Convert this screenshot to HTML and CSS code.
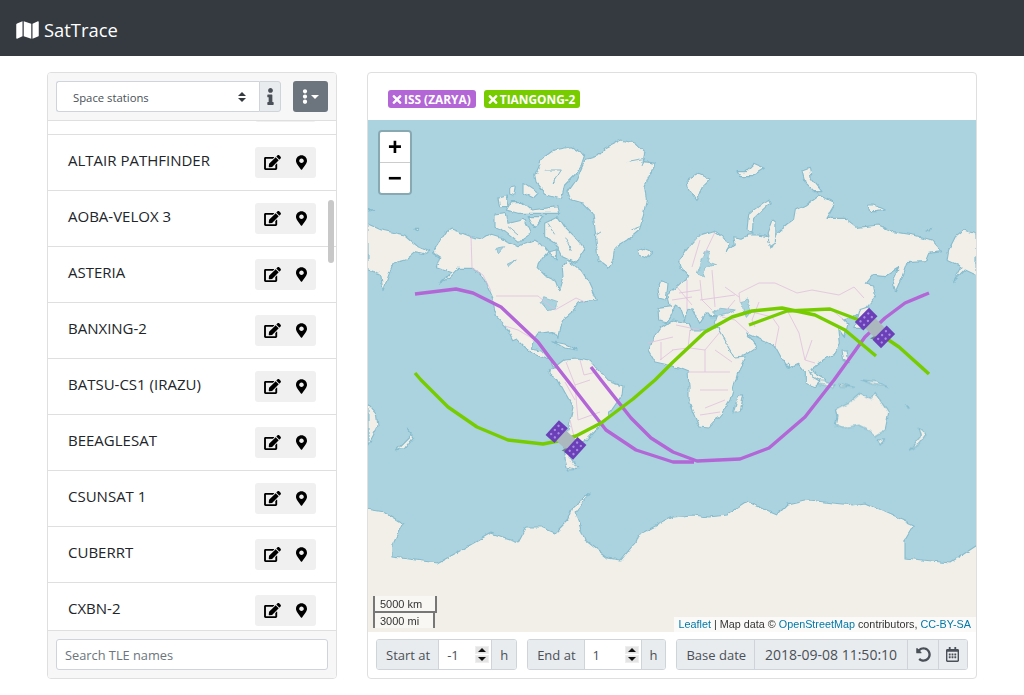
FILE: index.html
```html
<!DOCTYPE html>
<html lang="en">
  <head>
    <meta charset="UTF-8" />
    <meta name="viewport" content="width=device-width, initial-scale=1.0" />
    <title>SatTrace</title>
    <link rel="stylesheet" href="styles.css">
  </head>
  <body>
    <svg class="icon-defs" aria-hidden="true">
      <symbol id="i-map" viewBox="0 0 576 512"><path d="M0 117.66v346.32c0 11.32 11.43 19.06 21.94 14.86L160 416V32L20.12 87.95A32.006 32.006 0 0 0 0 117.66zM192 416l192 64V96L192 32v384zM554.06 33.16L416 96v384l139.88-55.95A31.996 31.996 0 0 0 576 394.34V48.02c0-11.32-11.43-19.06-21.94-14.86z"/></symbol>
      <symbol id="i-edit" viewBox="0 0 576 512"><path d="M402.6 83.2l90.2 90.2c3.8 3.8 3.8 10 0 13.8L274.4 405.6l-92.8 10.3c-12.4 1.4-22.9-9.1-21.5-21.5l10.3-92.8L388.8 83.2c3.8-3.8 10-3.8 13.8 0zm162-22.9l-48.8-48.8c-15.2-15.2-39.9-15.2-55.2 0l-35.4 35.4c-3.8 3.8-3.8 10 0 13.8l90.2 90.2c3.8 3.8 10 3.8 13.8 0l35.4-35.4c15.2-15.3 15.2-40 0-55.2zM384 346.2V448H64V128h229.8c3.2 0 6.2-1.3 8.5-3.5l40-40c7.6-7.6 2.2-20.5-8.5-20.5H48C21.5 64 0 85.5 0 112v352c0 26.5 21.5 48 48 48h352c26.5 0 48-21.5 48-48V306.2c0-10.7-12.9-16-20.5-8.5l-40 40c-2.2 2.3-3.5 5.3-3.5 8.5z"/></symbol>
      <symbol id="i-marker" viewBox="0 0 384 512"><path d="M172.268 501.67C26.97 291.031 0 260.497 0 192 0 85.961 85.961 0 192 0s192 85.961 192 192c0 68.497-26.97 99.031-172.268 309.67-9.535 13.774-29.93 13.773-39.464 0zM192 272c44.183 0 80-35.817 80-80s-35.817-80-80-80-80 35.817-80 80 35.817 80 80 80z"/></symbol>
      <symbol id="i-info" viewBox="0 0 192 512"><path d="M20 424.229h20V279.771H20c-11.046 0-20-8.954-20-20V212c0-11.046 8.954-20 20-20h112c11.046 0 20 8.954 20 20v212.229h20c11.046 0 20 8.954 20 20V492c0 11.046-8.954 20-20 20H20c-11.046 0-20-8.954-20-20v-47.771c0-11.046 8.954-20 20-20zM96 0C56.235 0 24 32.235 24 72s32.235 72 72 72 72-32.235 72-72S135.764 0 96 0z"/></symbol>
      <symbol id="i-dots" viewBox="0 0 192 512"><path d="M96 184c39.8 0 72 32.2 72 72s-32.2 72-72 72-72-32.2-72-72 32.2-72 72-72zM24 80c0 39.8 32.2 72 72 72s72-32.2 72-72S135.8 8 96 8 24 40.2 24 80zm0 352c0 39.8 32.2 72 72 72s72-32.2 72-72-32.2-72-72-72-72 32.2-72 72z"/></symbol>
      <symbol id="i-times" viewBox="0 0 352 512"><path d="M242.72 256l100.07-100.07c12.28-12.28 12.28-32.19 0-44.48l-22.24-22.24c-12.28-12.28-32.19-12.28-44.48 0L176 189.28 75.93 89.21c-12.28-12.28-32.19-12.28-44.48 0L9.21 111.45c-12.28 12.28-12.28 32.19 0 44.48L109.28 256 9.21 356.07c-12.28 12.28-12.28 32.19 0 44.48l22.24 22.24c12.28 12.28 32.2 12.28 44.48 0L176 322.72l100.07 100.07c12.28 12.28 32.2 12.28 44.48 0l22.24-22.24c12.28-12.28 12.28-32.19 0-44.48L242.72 256z"/></symbol>
      <symbol id="i-undo" viewBox="0 0 512 512"><path d="M255.545 8c-66.269.119-126.438 26.233-170.86 68.685L48.971 40.971C33.851 25.851 8 36.559 8 57.941V192c0 13.255 10.745 24 24 24h134.059c21.382 0 32.09-25.851 16.971-40.971l-41.75-41.75c30.864-28.899 70.801-44.907 113.23-45.273 92.398-.798 170.283 73.977 169.484 169.442C423.236 348.009 349.816 424 256 424c-41.127 0-79.997-14.678-110.63-41.556-4.743-4.161-11.906-3.908-16.368.553L89.34 422.659c-4.872 4.872-4.631 12.815.482 17.433C133.798 479.813 192.074 504 256 504c136.966 0 247.999-111.033 248-247.998C504.001 119.193 392.354 7.755 255.545 8z"/></symbol>
      <symbol id="i-calendar" viewBox="0 0 448 512"><path d="M148 288h-40c-6.6 0-12-5.4-12-12v-40c0-6.6 5.4-12 12-12h40c6.6 0 12 5.4 12 12v40c0 6.6-5.4 12-12 12zm108-12v-40c0-6.6-5.4-12-12-12h-40c-6.6 0-12 5.4-12 12v40c0 6.6 5.4 12 12 12h40c6.6 0 12-5.4 12-12zm96 0v-40c0-6.6-5.4-12-12-12h-40c-6.6 0-12 5.4-12 12v40c0 6.6 5.4 12 12 12h40c6.6 0 12-5.4 12-12zm-96 96v-40c0-6.6-5.4-12-12-12h-40c-6.6 0-12 5.4-12 12v40c0 6.6 5.4 12 12 12h40c6.6 0 12-5.4 12-12zm-96 0v-40c0-6.6-5.4-12-12-12h-40c-6.6 0-12 5.4-12 12v40c0 6.6 5.4 12 12 12h40c6.6 0 12-5.4 12-12zm192 0v-40c0-6.6-5.4-12-12-12h-40c-6.6 0-12 5.4-12 12v40c0 6.6 5.4 12 12 12h40c6.6 0 12-5.4 12-12zm96-260v352c0 26.5-21.5 48-48 48H48c-26.5 0-48-21.5-48-48V112c0-26.5 21.5-48 48-48h48V12c0-6.6 5.4-12 12-12h40c6.6 0 12 5.4 12 12v52h128V12c0-6.6 5.4-12 12-12h40c6.6 0 12 5.4 12 12v52h48c26.5 0 48 21.5 48 48zm-48 346V160H48v298c0 3.3 2.7 6 6 6h340c3.3 0 6-2.7 6-6z"/></symbol>
      <symbol id="i-sat" viewBox="-20 -20 40 40" overflow="visible">
        <rect x="-7" y="-7" width="14" height="14" fill="#abb8bd"/>
        <path d="M-7 5 L-11 4 L-8 9 L-5 12 L-4 8 Z" fill="#6f7f86"/>
        <g transform="translate(0 -12.5)">
          <rect x="-10" y="-6" width="20" height="12" fill="#6a3fb8"/>
          <g fill="#a98ee0"><circle cx="-5.5" cy="-2.5" r="1.2"/><circle cx="0" cy="-2.5" r="1.2"/><circle cx="5.5" cy="-2.5" r="1.2"/><circle cx="-5.5" cy="2.5" r="1.2"/><circle cx="0" cy="2.5" r="1.2"/><circle cx="5.5" cy="2.5" r="1.2"/></g>
        </g>
        <g transform="translate(0 12.5)">
          <rect x="-10" y="-6" width="20" height="12" fill="#6a3fb8"/>
          <g fill="#a98ee0"><circle cx="-5.5" cy="-2.5" r="1.2"/><circle cx="0" cy="-2.5" r="1.2"/><circle cx="5.5" cy="-2.5" r="1.2"/><circle cx="-5.5" cy="2.5" r="1.2"/><circle cx="0" cy="2.5" r="1.2"/><circle cx="5.5" cy="2.5" r="1.2"/></g>
        </g>
      </symbol>
      <filter id="rough" x="-5%" y="-5%" width="110%" height="110%">
        <feTurbulence type="fractalNoise" baseFrequency="0.11" numOctaves="3" seed="4"/>
        <feDisplacementMap in="SourceGraphic" scale="5" xChannelSelector="R" yChannelSelector="G"/>
      </filter>
    </svg>

    <nav class="navbar">
      <svg class="brand-icon"><use href="#i-map"/></svg>
      <span class="brand-name">SatTrace</span>
    </nav>

    <main class="page">
      <section class="card sidebar">
        <div class="card-bar sidebar-top">
          <div class="select-group">
            <select class="group-select">
              <option>Space stations</option>
            </select>
            <span class="info-addon"><svg class="icon-info"><use href="#i-info"/></svg></span>
          </div>
          <button class="menu-btn">
            <svg class="icon-dots"><use href="#i-dots"/></svg>
            <span class="caret"></span>
          </button>
        </div>

        <div class="tle-wrap">
          <ul class="tle-list">
            <li class="tle-item tle-first">
              <span></span>
              <div class="tle-actions"><svg class="icon-edit"><use href="#i-edit"/></svg><svg class="icon-marker"><use href="#i-marker"/></svg></div>
            </li>
            <li class="tle-item">
              <span>ALTAIR PATHFINDER</span>
              <div class="tle-actions"><svg class="icon-edit"><use href="#i-edit"/></svg><svg class="icon-marker"><use href="#i-marker"/></svg></div>
            </li>
            <li class="tle-item">
              <span>AOBA-VELOX 3</span>
              <div class="tle-actions"><svg class="icon-edit"><use href="#i-edit"/></svg><svg class="icon-marker"><use href="#i-marker"/></svg></div>
            </li>
            <li class="tle-item">
              <span>ASTERIA</span>
              <div class="tle-actions"><svg class="icon-edit"><use href="#i-edit"/></svg><svg class="icon-marker"><use href="#i-marker"/></svg></div>
            </li>
            <li class="tle-item">
              <span>BANXING-2</span>
              <div class="tle-actions"><svg class="icon-edit"><use href="#i-edit"/></svg><svg class="icon-marker"><use href="#i-marker"/></svg></div>
            </li>
            <li class="tle-item">
              <span>BATSU-CS1 (IRAZU)</span>
              <div class="tle-actions"><svg class="icon-edit"><use href="#i-edit"/></svg><svg class="icon-marker"><use href="#i-marker"/></svg></div>
            </li>
            <li class="tle-item">
              <span>BEEAGLESAT</span>
              <div class="tle-actions"><svg class="icon-edit"><use href="#i-edit"/></svg><svg class="icon-marker"><use href="#i-marker"/></svg></div>
            </li>
            <li class="tle-item">
              <span>CSUNSAT 1</span>
              <div class="tle-actions"><svg class="icon-edit"><use href="#i-edit"/></svg><svg class="icon-marker"><use href="#i-marker"/></svg></div>
            </li>
            <li class="tle-item">
              <span>CUBERRT</span>
              <div class="tle-actions"><svg class="icon-edit"><use href="#i-edit"/></svg><svg class="icon-marker"><use href="#i-marker"/></svg></div>
            </li>
            <li class="tle-item">
              <span>CXBN-2</span>
              <div class="tle-actions"><svg class="icon-edit"><use href="#i-edit"/></svg><svg class="icon-marker"><use href="#i-marker"/></svg></div>
            </li>
          </ul>
          <div class="scroll-thumb"></div>
        </div>

        <div class="card-bar sidebar-bottom">
          <input class="search-input" type="text" placeholder="Search TLE names" />
        </div>
      </section>

      <section class="card viewer">
        <div class="badges">
          <span class="badge badge-iss"><svg class="icon-times"><use href="#i-times"/></svg>ISS (ZARYA)</span>
          <span class="badge badge-tiangong"><svg class="icon-times"><use href="#i-times"/></svg>TIANGONG-2</span>
        </div>

        <div class="map">
          <svg class="map-art" viewBox="368 120 608 512" preserveAspectRatio="none">
            <g filter="url(#rough)">
            <!-- land traced from the tiles, in 3x crop coordinates -->
            <g transform="translate(368 120) scale(.33333)">
              <g class="land">
                <path d="M197,392 L215,365 L235,335 L250,327 L310,350 L345,358 L370,343 L400,352 L420,365 L450,380 L470,370 L500,360 L520,372 L540,395 L515,425 L510,445 L530,465 L560,480 L572,512 L585,470 L583,440 L600,422 L640,452 L665,490 L688,540 L650,545 L630,552 L618,568 L592,590 L575,622 L570,655 L555,635 L510,640 L497,658 L490,685 L520,690 L533,705 L560,735 L592,780 L575,780 L545,720 L490,700 L450,660 L437,665 L415,620 L385,590 L380,550 L365,515 L340,462 L310,445 L270,445 L240,475 L215,490 L250,455 L205,440 L215,412 L197,400 Z"/>
                <path d="M600,215 L625,180 L640,145 L655,115 L690,105 L710,85 L760,60 L800,70 L830,100 L825,125 L862,130 L845,165 L830,200 L835,240 L825,290 L815,330 L780,360 L740,385 L735,420 L722,445 L690,420 L685,370 L680,320 L675,280 L645,250 L610,240 Z"/>
                <path d="M500,165 L520,120 L560,90 L610,80 L650,105 L640,135 L620,165 L590,195 L580,235 L530,220 L505,190 Z"/>
                <path d="M530,310 L570,290 L590,320 L620,350 L650,385 L622,430 L580,410 L560,370 L530,350 Z"/>
                <path d="M378,285 L415,280 L420,310 L470,298 L490,340 L450,367 L410,335 L378,322 Z"/>
                <path d="M390,235 L415,228 L420,260 L395,260 Z"/>
                <path d="M430,245 L460,245 L490,270 L570,260 L575,280 L500,280 L450,280 L415,270 Z"/>
                <path d="M465,190 L510,220 L495,235 L465,220 Z"/>
                <path d="M425,205 L445,200 L440,230 L425,225 Z"/>
                <path d="M480,290 L525,290 L500,325 Z"/>
                <path d="M540,395 L565,390 L565,420 Z"/>
                <path d="M810,395 L830,385 L855,395 L835,415 L815,405 Z"/>
                <path d="M0,312 L40,330 L110,345 L150,380 L185,395 L170,402 L140,395 L110,420 L75,430 L45,512 L38,462 L0,450 Z"/>
                <path d="M555,665 L590,672 L625,690 L590,684 Z"/>
                <path d="M138,325 L155,325 L150,332 Z"/>
                <path d="M870,505 L880,482 L900,490 L895,540 L875,535 Z"/>
                <path d="M0,265 L18,272 L5,276 Z"/>
              </g>
              <path class="inner-water" d="M527,530 L570,545 L565,567 L540,572 L520,548 Z M385,385 L410,380 L392,400 Z M418,432 L445,420 L422,440 Z"/>
              <path class="fjord" d="M775,125 L830,115 L822,135 M790,330 L815,320 M685,345 L700,335 M530,150 L580,150 L555,190 M420,320 L450,345 M540,310 L560,340 M590,350 L610,390"/>
            </g>

            <g transform="translate(672 120) scale(.33333)">
              <g class="land">
                <path d="M-42,565 L-5,560 L-12,530 L0,510 L15,500 L25,490 L45,480 L50,470 L25,440 L20,425 L50,385 L85,345 L125,332 L175,370 L160,395 L190,375 L185,350 L210,355 L230,345 L255,345 L290,350 L300,385 L315,340 L345,315 L365,300 L370,270 L400,255 L440,225 L480,245 L485,260 L465,295 L520,295 L555,322 L620,315 L665,335 L725,345 L780,360 L810,395 L770,400 L760,425 L705,428 L690,470 L670,515 L663,480 L680,445 L640,470 L600,465 L580,490 L605,495 L610,530 L575,570 L545,590 L515,600 L528,612 L518,650 L500,622 L505,670 L490,700 L440,730 L420,745 L445,785 L430,800 L400,790 L400,755 L380,730 L345,745 L310,680 L280,665 L225,640 L255,680 L225,700 L175,725 L140,630 L130,605 L135,590 L115,590 L105,578 L80,610 L60,570 L50,568 L40,605 L25,565 L10,555 L-5,590 L-15,605 L-40,600 Z"/>
                <path d="M45,180 L80,160 L115,175 L90,200 L75,245 L50,210 Z"/>
                <path d="M225,330 L230,280 L290,238 L295,248 L245,295 L240,340 Z"/>
                <path d="M195,155 L220,155 L245,130 L280,145 L240,170 L205,170 Z"/>
                <path d="M390,150 L412,142 L418,175 L450,215 L425,215 L400,190 Z"/>
                <path d="M585,255 L610,255 L640,270 L610,275 L590,275 Z"/>
                <path d="M285,340 L300,300 L312,310 L310,370 L295,380 Z"/>
                <path d="M560,570 L590,560 L600,590 L570,625 L545,625 Z"/>
                <path d="M830,390 L850,350 L875,330 L912,342 L912,465 L880,450 L845,485 L870,440 L825,420 Z"/>
                <path d="M510,690 L525,690 L530,730 L515,720 Z"/>
                <path d="M340,730 L350,730 L348,745 Z"/>
                <path d="M410,750 L460,780 L455,790 L420,770 Z"/>
                <path d="M765,330 L778,325 L775,333 Z"/>
              </g>
              <path class="inner-water" d="M75,462 L100,395 L115,398 L108,425 L135,435 L105,440 L90,460 L95,472 Z M125,578 L145,565 L190,570 L170,582 L130,590 Z M205,545 L225,540 L235,575 L222,590 L215,565 Z"/>
            </g>

            <g transform="translate(672 380) scale(.33333)">
              <g class="land">
                <path d="M490,90 L530,70 L565,40 L600,55 L610,38 L650,100 L640,150 L610,168 L590,150 L560,135 L510,145 L490,135 L495,110 Z"/>
                <path d="M615,180 L635,180 L625,195 Z"/>
                <path d="M712,210 L745,170 L738,145 L762,165 L745,190 Z"/>
                <path d="M185,95 L200,45 L215,45 L205,90 Z"/>
                <path d="M440,0 L490,15 L480,22 L445,12 Z"/>
                <path d="M500,10 L545,22 L505,18 Z"/>
                <path d="M570,0 L610,5 L650,22 L600,12 Z"/>
                <path d="M700,75 L712,85 L704,82 Z"/>
              </g>
            </g>

            <g transform="translate(368 380) scale(.33333)">
              <g class="land">
                <path d="M0,70 L25,100 L30,140 L0,195 Z"/>
                <path d="M85,210 L130,165 L115,145 L137,170 L110,205 Z"/>
                <path d="M600,270 L630,268 L612,250 Z"/>
              </g>
            </g>

            <g class="land-px">
              <path d="M651,341 L660,328 L672,320 L689,323 L692,330 L712,330 L717,327 L735,358 L746,357 L738,372 L730,400 L722,413 L709,428 L699,427 L689,403 L689,387 L688,372 L673,366 L655,362 L648,350 Z"/>
              <path d="M548,372 L565,359 L578,358 L590,360 L608,380 L623,385 L622,395 L605,420 L586,440 L578,444 L570,458 L578,470 L568,467 L564,450 L568,430 L573,407 L558,380 Z"/>
            </g>

            <!-- Antarctica runs off the bottom and wraps past both map edges -->
            <path class="land-px" d="M360,508 L385,512 L403,523 L393,543 L393,557 L438,563 L458,552 L491,533 L518,542 L526,527 L541,527 L555,533 L568,520 L573,507 L591,493 L575,513 L585,540 L608,558 L621,560 L635,543 L638,535 L673,517 L692,515 L709,517 L727,515 L747,502 L777,515 L787,505 L809,500 L832,503 L852,505 L865,503 L885,512 L914,525 L905,540 L905,558 L950,563 L985,540 L985,640 L360,640 Z"/>
            </g>

            <!-- country borders -->
            <path class="border" d="M471,236 L472,268 L483,275 L491,291 M496,296 L538,296 L555,310 L576,298 L585,302 M505,326 L518,330 L535,340"/>
            <path class="border" d="M676,325 L700,330 M648,343 L673,337 M661,342 L661,360 M673,350 L660,360 M690,330 L688,348 L672,350 M690,348 L705,350 L720,332 M705,350 L705,372 L688,372 M705,372 L730,372 M715,350 L732,362 M700,390 L728,390 M705,408 L725,400 M700,415 L720,412"/>
            <path class="border" d="M566,362 L575,385 L590,380 M575,385 L578,420 M578,420 L600,412 M575,400 L565,382 M580,360 L584,375 L596,372 M570,420 L576,445"/>
            <path class="border" d="M677,287 L692,305 M687,280 L687,310 M672,300 L692,297 M700,280 L702,300 L712,310 M679,293 L700,290 M712,270 L715,307 M725,287 L739,297 M739,293 L759,283 L775,283 L797,293 L812,290 L839,295 L854,287 L864,298 M739,293 L740,302 M752,312 L772,317 L787,310 L812,310 L832,310 L844,320 M772,317 L779,327 L775,347 M787,310 L799,333 L805,360 M759,302 L752,320 L755,327 M722,317 L735,320 L749,333 M812,340 L805,360 L815,363 M725,312 L735,300 M705,253 L715,232 M692,267 L700,240 M700,300 L735,295"/>

            <!-- orbit tracks -->
            <polyline class="track track-iss" points="415,294 456,289 473,293 501,307 538,342 550,358 568,381 585,403 606,430 636,450 673,462 694,462"/>
            <polyline class="track track-iss" points="591,367 601,380 631,418 651,438 673,452 697,461 740,459 769,448 805,417 834,380 865,337 885,318 905,303 929,293"/>
            <polyline class="track track-tiangong" points="415,373 421,380 448,407 477,427 508,440 543,444 558,441 576,436 601,423 633,399 655,380 672,363 705,332 732,317 752,311 782,308 815,315 845,330 876,356"/>
            <polyline class="track track-tiangong" points="749,325 787,311 830,309 859,320 899,347 929,374"/>

            <use href="#i-sat" x="-20" y="-20" width="40" height="40" transform="translate(566 440) rotate(-48)"/>
            <use href="#i-sat" x="-20" y="-20" width="40" height="40" transform="translate(875 328) rotate(-45)"/>
          </svg>

          <div class="zoom-control">
            <a class="zoom-btn">+</a>
            <a class="zoom-btn">&#8722;</a>
          </div>

          <div class="scale-control">
            <div class="scale-km">5000 km</div>
            <div class="scale-mi">3000 mi</div>
          </div>

          <div class="attribution">
            <a>Leaflet</a> | Map data &copy; <a>OpenStreetMap</a> contributors, <a>CC-BY-SA</a>
          </div>
        </div>

        <div class="controls">
          <div class="input-group">
            <span class="addon">Start at</span>
            <div class="num-field num-start">
              <input class="num-input" type="number" value="-1" />
              <span class="spin"><span class="spin-up"></span><span class="spin-down"></span></span>
            </div>
            <span class="addon addon-h">h</span>
          </div>
          <div class="input-group">
            <span class="addon">End at</span>
            <div class="num-field num-end">
              <input class="num-input" type="number" value="1" />
              <span class="spin"><span class="spin-up"></span><span class="spin-down"></span></span>
            </div>
            <span class="addon addon-h">h</span>
          </div>
          <div class="input-group">
            <span class="addon">Base date</span>
            <span class="addon addon-date">2018-09-08 11:50:10</span>
            <button class="addon-btn"><svg class="icon-undo"><use href="#i-undo"/></svg></button>
            <button class="addon-btn btn-last"><svg class="icon-calendar"><use href="#i-calendar"/></svg></button>
          </div>
        </div>
      </section>
    </main>
  </body>
</html>
```

FILE: styles.css
```css
* {
  box-sizing: border-box;
}
html,
body {
  height: 100%;
}
body {
  margin: 0;
  display: flex;
  flex-direction: column;
  overflow: hidden;
  font-family: "Open Sans", "Noto Sans", sans-serif;
  font-size: 15px;
  color: #212529;
  background: #fff;
}
.icon-defs {
  position: absolute;
  width: 0;
  height: 0;
}
.navbar {
  flex: 0 0 56px;
  display: flex;
  align-items: center;
  padding: 3px 16px 0;
  background: #343a40;
  color: #fff;
}
.brand-icon {
  width: 23px;
  height: 20px;
  margin-right: 5px;
  fill: #fff;
}
.brand-name {
  font-size: 18.4px;
}
.page {
  flex: 1;
  min-height: 0;
  display: flex;
  gap: 30px;
  padding: 16px 47px;
}
.card {
  display: flex;
  flex-direction: column;
  border: 1px solid #dfdfdf;
  border-radius: 4px;
  background: #fff;
  overflow: hidden;
}
.card-bar {
  background: #f7f7f7;
  padding: 8px;
}

/* sidebar */
.sidebar {
  flex: 0 0 290px;
}
.sidebar-top {
  display: flex;
  justify-content: space-between;
  height: 48px;
  border-bottom: 1px solid #dfdfdf;
}
.select-group {
  display: flex;
  width: 225px;
  height: 31px;
}
.group-select {
  flex: 1;
  min-width: 0;
  appearance: none;
  padding: 2px 24px 0 16px;
  border: 1px solid #ced4da;
  border-right: 0;
  border-radius: 3px 0 0 3px;
  font-family: inherit;
  font-size: 11.3px;
  color: #495057;
  background: #fff url("data:image/svg+xml,%3Csvg xmlns='http://www.w3.org/2000/svg' viewBox='0 0 4 5'%3E%3Cpath fill='%23343a40' d='M2 0L0 2h4zm0 5L0 3h4z'/%3E%3C/svg%3E") no-repeat right 13px center / 8px 10px;
}
.info-addon {
  flex: 0 0 22px;
  display: flex;
  align-items: center;
  justify-content: center;
  border: 1px solid #ced4da;
  border-radius: 0 3px 3px 0;
  background: #e9ecef;
}
.icon-info {
  width: 7px;
  height: 17px;
  fill: #495057;
}
.menu-btn {
  width: 35px;
  height: 31px;
  display: flex;
  align-items: center;
  justify-content: center;
  gap: 3px;
  padding: 0;
  border: 0;
  border-radius: 3px;
  background: #6c757d;
}
.icon-dots {
  width: 6px;
  height: 15px;
  fill: #fff;
}
.caret {
  border-top: 4px solid #fff;
  border-left: 4px solid transparent;
  border-right: 4px solid transparent;
}
.tle-wrap {
  flex: 1;
  min-height: 0;
  position: relative;
  overflow: hidden;
}
.tle-list {
  list-style: none;
  margin: 0;
  padding: 0;
}
.tle-item {
  height: 56px;
  display: flex;
  justify-content: space-between;
  align-items: flex-start;
  padding: 12px 20px 0;
  border-bottom: 1px solid #dfdfdf;
  line-height: 26px;
}
.tle-first {
  margin-top: -42px;
}
.tle-actions {
  width: 61px;
  height: 31px;
  display: flex;
  align-items: center;
  justify-content: space-between;
  padding: 0 9px;
  border-radius: 3px;
  background: #f0f0f0;
  flex-shrink: 0;
}
.icon-edit {
  width: 17px;
  height: 15px;
  fill: #000;
}
.icon-marker {
  width: 11px;
  height: 15px;
  fill: #000;
}
.scroll-thumb {
  position: absolute;
  top: 79px;
  right: 2px;
  width: 6px;
  height: 63px;
  border-radius: 3px;
  background: #c8c8c8;
}
.sidebar-bottom {
  height: 48px;
  border-top: 1px solid #dfdfdf;
}
.search-input {
  display: block;
  width: 100%;
  height: 31px;
  padding: 1px 8px 0;
  border: 1px solid #ced4da;
  border-radius: 3px;
  font-family: inherit;
  font-size: 12.8px;
  color: #495057;
}
.search-input::placeholder {
  color: #6c757d;
}

/* map side */
.viewer {
  flex: 1;
  min-width: 0;
}
.badges {
  flex: 0 0 47px;
  display: flex;
  align-items: flex-start;
  gap: 8px;
  padding: 17px 20px 0;
}
.badge {
  height: 18px;
  display: flex;
  align-items: center;
  padding: 0 5px 0 4px;
  border-radius: 3px;
  font-size: 11.9px;
  font-weight: 700;
  color: #fff;
}
.badge-iss {
  background: #b366d6;
}
.badge-tiangong {
  background: #77cc00;
}
.icon-times {
  width: 10px;
  height: 13px;
  margin-right: 2px;
  fill: #fff;
}
.map {
  flex: 0 0 512px;
  position: relative;
  background: #aad3df;
  overflow: hidden;
}
.map-art {
  display: block;
  width: 100%;
  height: 100%;
}
.land path,
.land-px path,
path.land-px {
  fill: #f2efe9;
  stroke: #86bccd;
}
.land path {
  stroke-width: 3.3;
  stroke-linejoin: round;
}
.land-px path,
path.land-px {
  stroke-width: 1.1;
  stroke-linejoin: round;
}
.inner-water {
  fill: #aad3df;
  stroke: #86bccd;
  stroke-width: 2.4;
}
.fjord {
  fill: none;
  stroke: #86bccd;
  stroke-width: 3;
}
.border {
  fill: none;
  stroke: #e0bfdc;
  stroke-width: 0.8;
}
.track {
  fill: none;
  stroke-width: 3.4;
  stroke-linejoin: round;
}
.track-iss {
  stroke: #b366d6;
}
.track-tiangong {
  stroke: #77cc00;
}
.zoom-control {
  position: absolute;
  top: 10px;
  left: 10px;
  width: 34px;
  border: 2px solid rgba(0, 0, 0, 0.2);
  border-radius: 4px;
  background-clip: padding-box;
}
.zoom-btn {
  display: block;
  height: 30px;
  background: #fff;
  font: bold 24px/34px "Liberation Mono", monospace;
  text-align: center;
  color: #000;
}
.zoom-btn:first-child {
  height: 31px;
  border-bottom: 1px solid #ccc;
  border-radius: 2px 2px 0 0;
}
.zoom-btn:last-child {
  border-radius: 0 0 2px 2px;
}
.scale-control {
  position: absolute;
  left: 5px;
  bottom: 4px;
  font: 11px/1.1 "Liberation Sans", Arial, sans-serif;
  color: #333;
}
.scale-km,
.scale-mi {
  padding: 2px 5px 1px;
  border: 2px solid #777;
  background: rgba(255, 255, 255, 0.5);
  white-space: nowrap;
}
.scale-km {
  width: 64px;
  height: 17px;
  border-top: 0;
}
.scale-mi {
  width: 62px;
  height: 15px;
  border-top: 0;
  border-bottom: 0;
}
.attribution {
  position: absolute;
  right: 0;
  bottom: 0;
  height: 15px;
  padding: 0 5px;
  background: rgba(255, 255, 255, 0.7);
  font: 10.8px/15px "Liberation Sans", Arial, sans-serif;
  color: #333;
}
.attribution a {
  color: #0078a8;
}

/* bottom controls */
.controls {
  flex: 1;
  display: flex;
  gap: 10px;
  padding: 7px 8px 0;
}
.input-group {
  display: flex;
  height: 31px;
  border: 1px solid #ced4da;
  border-radius: 3px;
  overflow: hidden;
  font-size: 13px;
  color: #495057;
}
.addon {
  display: flex;
  align-items: center;
  padding: 0 8px 0 9px;
  background: #e9ecef;
  white-space: nowrap;
}
.addon-h {
  width: 25px;
  justify-content: center;
  padding: 0;
  border-left: 1px solid #ced4da;
}
.addon-date {
  width: 153px;
  justify-content: center;
  padding: 0;
  border-left: 1px solid #ced4da;
  font-size: 14px;
}
.num-field {
  display: flex;
  align-items: center;
  border-left: 1px solid #ced4da;
  padding-right: 1px;
  background: #fff;
}
.num-start {
  width: 53px;
}
.num-end {
  width: 57px;
}
.num-input {
  flex: 1;
  min-width: 0;
  border: 0;
  padding: 0 0 0 8px;
  font-family: inherit;
  font-size: 13px;
  color: #495057;
  appearance: textfield;
}
.num-input::-webkit-inner-spin-button {
  display: none;
}
.spin {
  flex: 0 0 14px;
  height: 17px;
  display: flex;
  flex-direction: column;
  gap: 1px;
  margin-right: 1px;
}
.spin-up,
.spin-down {
  flex: 1;
  display: flex;
  align-items: center;
  justify-content: center;
  background: #e4e4e4;
  border: 1px solid #eeeeee;
}
.spin-up::before {
  content: "";
  border-bottom: 4px solid #111;
  border-left: 4px solid transparent;
  border-right: 4px solid transparent;
}
.spin-down::before {
  content: "";
  border-top: 4px solid #111;
  border-left: 4px solid transparent;
  border-right: 4px solid transparent;
}
.addon-btn {
  width: 31px;
  display: flex;
  align-items: center;
  justify-content: center;
  padding: 0;
  border: 0;
  border-left: 1px solid #ced4da;
  background: #e9ecef;
}
.btn-last {
  width: 29px;
}
.icon-undo {
  width: 15px;
  height: 15px;
  fill: #495057;
}
.icon-calendar {
  width: 13px;
  height: 15px;
  fill: #495057;
}
```
